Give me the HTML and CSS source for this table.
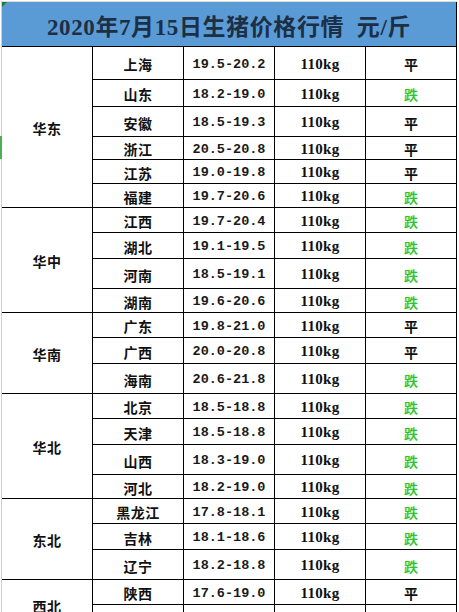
FILE: index.html
```html
<!DOCTYPE html>
<html lang="zh-CN">
<head>
<meta charset="utf-8">
<title>2020年7月15日生猪价格行情</title>
<link rel="stylesheet" href="styles.css">
</head>
<body>
<div class="sheet">
  <div class="sheet-mark"></div>
  <div class="sheet-sel"></div>
  <div class="grid">
    <div class="title">2020年7月15日生猪价格行情&nbsp;&nbsp;元/斤</div>

    <div class="region span6">华东</div>
    <div class="prov">上海</div><div class="price">19.5-20.2</div><div class="wt">110kg</div><div class="tr">平</div>
    <div class="prov">山东</div><div class="price">18.2-19.0</div><div class="wt">110kg</div><div class="tr down">跌</div>
    <div class="prov">安徽</div><div class="price">18.5-19.3</div><div class="wt">110kg</div><div class="tr">平</div>
    <div class="prov">浙江</div><div class="price">20.5-20.8</div><div class="wt">110kg</div><div class="tr">平</div>
    <div class="prov">江苏</div><div class="price">19.0-19.8</div><div class="wt">110kg</div><div class="tr">平</div>
    <div class="prov">福建</div><div class="price">19.7-20.6</div><div class="wt">110kg</div><div class="tr down">跌</div>

    <div class="region span4">华中</div>
    <div class="prov">江西</div><div class="price">19.7-20.4</div><div class="wt">110kg</div><div class="tr down">跌</div>
    <div class="prov">湖北</div><div class="price">19.1-19.5</div><div class="wt">110kg</div><div class="tr down">跌</div>
    <div class="prov">河南</div><div class="price">18.5-19.1</div><div class="wt">110kg</div><div class="tr down">跌</div>
    <div class="prov">湖南</div><div class="price">19.6-20.6</div><div class="wt">110kg</div><div class="tr down">跌</div>

    <div class="region span3">华南</div>
    <div class="prov">广东</div><div class="price">19.8-21.0</div><div class="wt">110kg</div><div class="tr">平</div>
    <div class="prov">广西</div><div class="price">20.0-20.8</div><div class="wt">110kg</div><div class="tr">平</div>
    <div class="prov">海南</div><div class="price">20.6-21.8</div><div class="wt">110kg</div><div class="tr down">跌</div>

    <div class="region span4">华北</div>
    <div class="prov">北京</div><div class="price">18.5-18.8</div><div class="wt">110kg</div><div class="tr down">跌</div>
    <div class="prov">天津</div><div class="price">18.5-18.8</div><div class="wt">110kg</div><div class="tr down">跌</div>
    <div class="prov">山西</div><div class="price">18.3-19.0</div><div class="wt">110kg</div><div class="tr down">跌</div>
    <div class="prov">河北</div><div class="price">18.2-19.0</div><div class="wt">110kg</div><div class="tr down">跌</div>

    <div class="region span3">东北</div>
    <div class="prov">黑龙江</div><div class="price">17.8-18.1</div><div class="wt">110kg</div><div class="tr down">跌</div>
    <div class="prov">吉林</div><div class="price">18.1-18.6</div><div class="wt">110kg</div><div class="tr down">跌</div>
    <div class="prov">辽宁</div><div class="price">18.2-18.8</div><div class="wt">110kg</div><div class="tr down">跌</div>

    <div class="region span2">西北</div>
    <div class="prov">陕西</div><div class="price">17.6-19.0</div><div class="wt">110kg</div><div class="tr">平</div>
    <div class="prov">甘肃</div><div class="price">17.5-18.6</div><div class="wt">110kg</div><div class="tr down">跌</div>
  </div>
</div>
</body>
</html>
```

FILE: styles.css
```css
html, body {
  margin: 0;
  padding: 0;
  background: #ffffff;
  overflow: hidden;
}

.sheet {
  position: relative;
  width: 459px;
  height: 612px;
  overflow: hidden;
}

.sheet-mark {
  position: absolute;
  left: 2px;
  top: 2px;
  width: 0;
  height: 0;
  border-top: 5px solid #1f7a3a;
  border-right: 5px solid transparent;
  z-index: 2;
}

.sheet-sel {
  position: absolute;
  left: 0;
  top: 136px;
  width: 2px;
  height: 23px;
  background: #4caf50;
  z-index: 2;
}

.grid {
  margin: 1px 0 0 1px;
  border-left: 1px solid #cfcfcf;
  border-top: 1px solid #dcdcdc;
  display: grid;
  grid-template-columns: repeat(5, 91px);
  grid-template-rows: 45px 33px 27px 30px 23px 24px 24px 25px 26px 30px 24px 25px 26px 30px 25px 26px 30px 24px 25px 26px 30px 25px 26px;
  width: 455px;
  font-family: "Noto Sans CJK SC", sans-serif;
  font-weight: 700;
  color: #111111;
}

.grid > div {
  box-sizing: border-box;
  border-right: 1px solid #000000;
  border-bottom: 1px solid #000000;
  display: flex;
  align-items: center;
  justify-content: center;
  padding-top: 2px;
  white-space: nowrap;
}

.title {
  grid-column: 1 / -1;
  background: #5b9bd5;
  color: #1c2f45;
  font-family: "Liberation Serif", "Noto Sans CJK SC", serif;
  font-size: 23px;
  font-weight: 700;
  letter-spacing: 0.6px;
}

.region {
  grid-column: 1;
  font-size: 14px;
  letter-spacing: 0.5px;
}

.span6 { grid-row: span 6; }
.span4 { grid-row: span 4; }
.span3 { grid-row: span 3; }
.span2 { grid-row: span 2; }

.prov {
  font-size: 14px;
  letter-spacing: 0.5px;
}

.price {
  font-family: "Liberation Mono", monospace;
  font-size: 13.5px;
  font-weight: 700;
  color: #1a1a1a;
}

.wt {
  font-family: "Liberation Serif", serif;
  font-size: 15px;
  font-weight: 700;
  letter-spacing: 0.3px;
}

.tr {
  font-size: 14px;
}

.down {
  color: #2ec22e;
  font-weight: 500;
  text-shadow: 0 0 2px #c4f2bd;
}
```
